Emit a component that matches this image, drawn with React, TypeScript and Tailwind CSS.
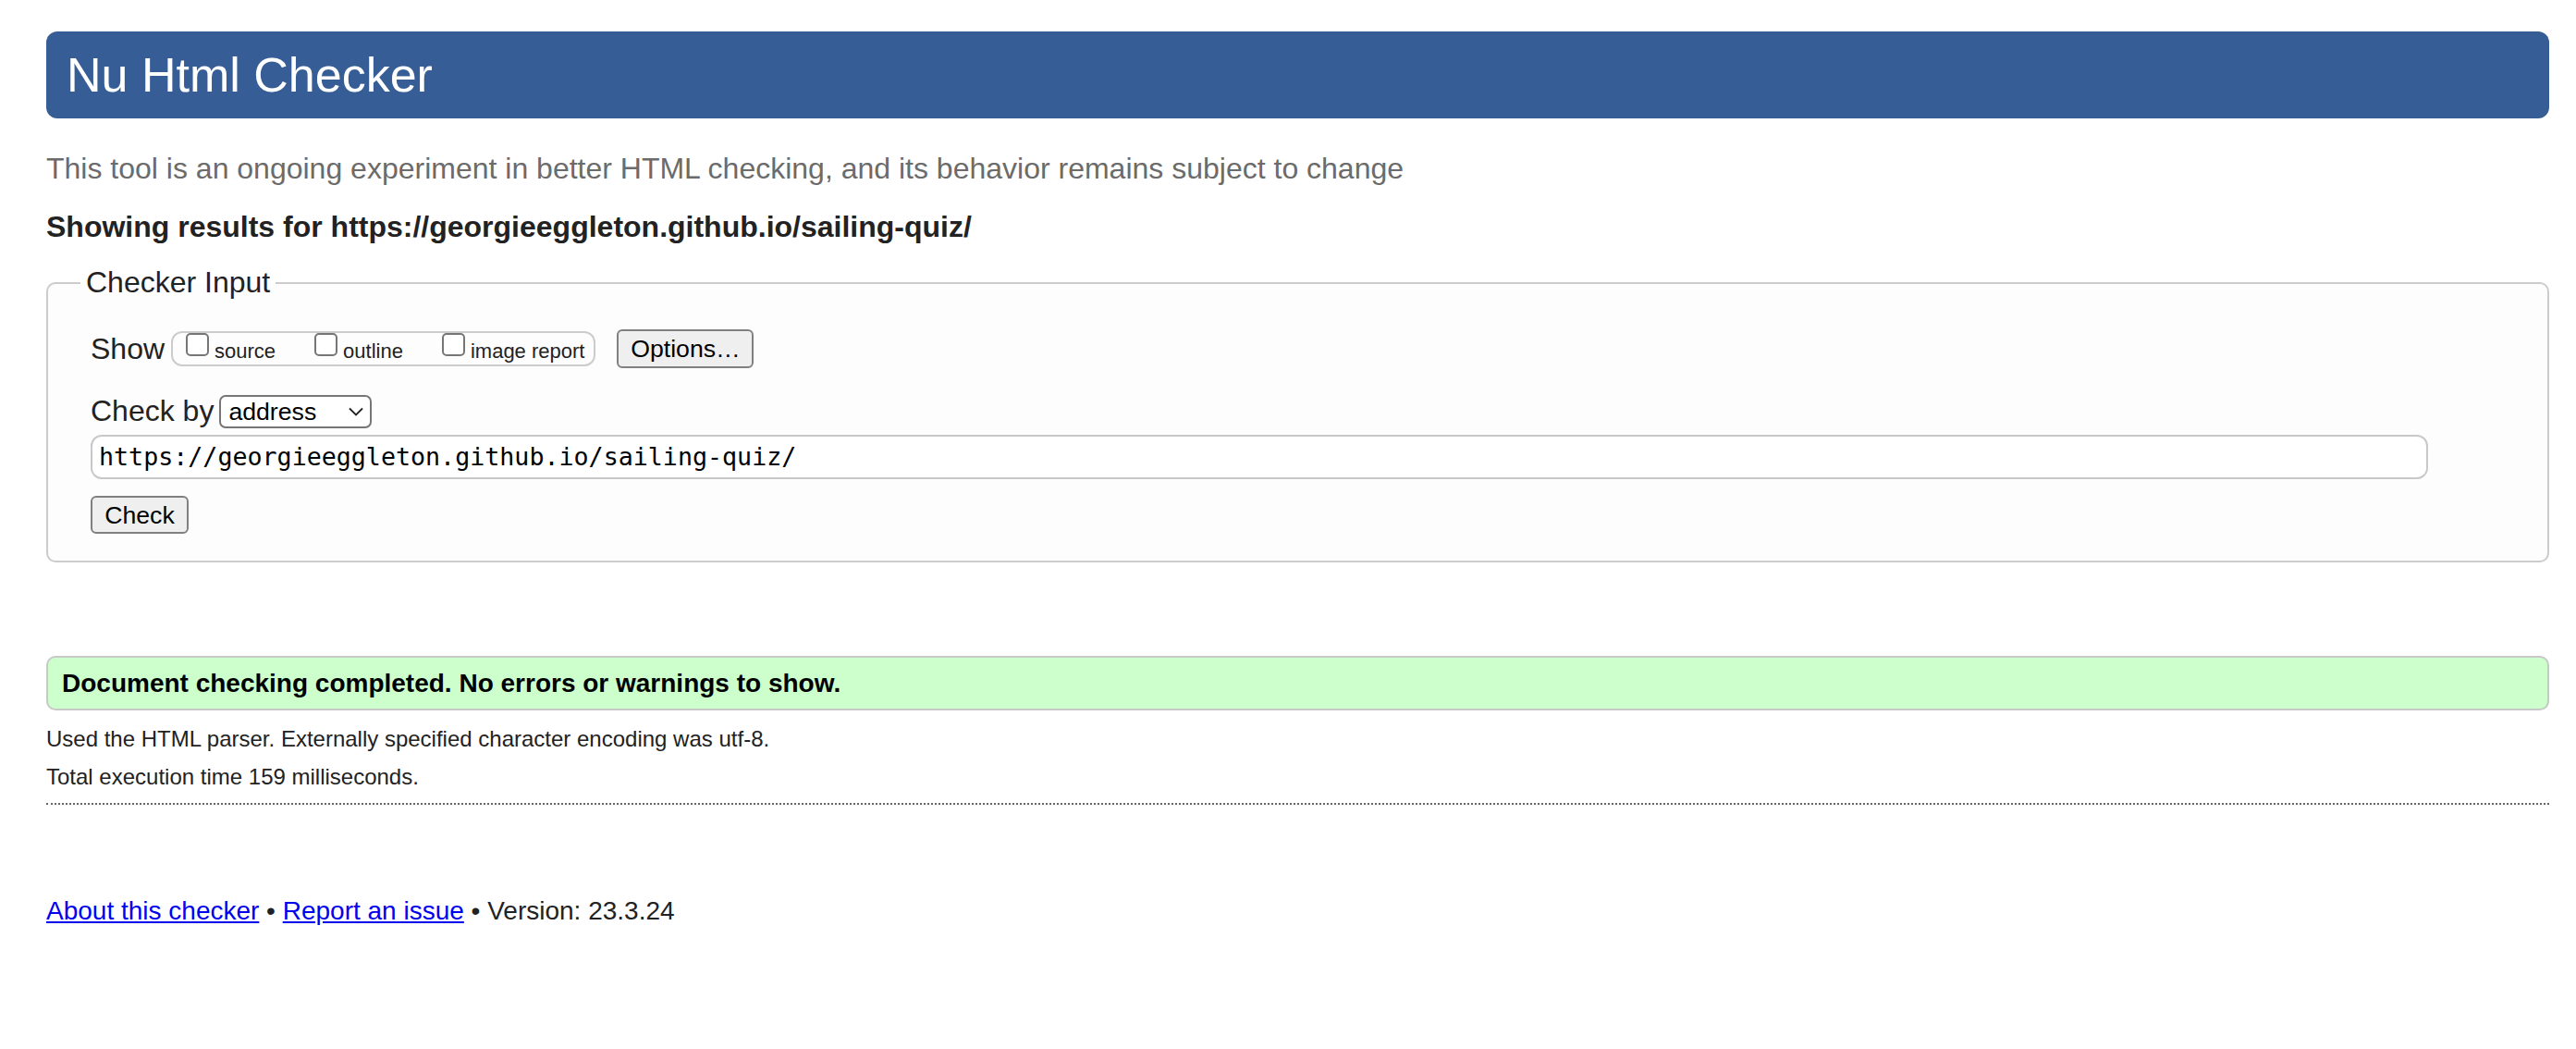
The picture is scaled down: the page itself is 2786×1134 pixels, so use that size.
import React from "react";

function Box({ label }: { label: string }) {
  return (
    <span className="flex items-baseline">
      <span className="inline-block h-[25px] w-[25px] -translate-y-[2px] rounded-[5px] border-2 border-[#767676] bg-white" />
      <span className="ml-[6px] text-[22px] leading-[25px] text-[#222]">{label}</span>
    </span>
  );
}

export default function App() {
  return (
    <div className="min-h-screen bg-white pl-[50px] pr-[29px] pt-[34px] pb-[80px] font-[family-name:'Liberation_Sans',Arial,sans-serif] text-[#222]">
      <h1 className="flex h-[94px] items-center rounded-[12px] bg-[#365d95] pl-[22px] text-[52px] font-normal text-white">
        Nu Html Checker
      </h1>

      <p className="mt-[36px] text-[32px] leading-[37px] text-[#6b6b6b]">
        This tool is an ongoing experiment in better HTML checking, and its behavior remains subject to change
      </p>

      <p className="mt-[26px] text-[32px] font-bold leading-[37px] text-[#222]">
        Showing results for https://georgieeggleton.github.io/sailing-quiz/
      </p>

      <fieldset className="mt-[23px] rounded-[10px] border-2 border-[#cccccc] bg-[#fdfdfd] px-[46px] pb-[29px] pt-[32px]">
        <legend className="-ml-[11px] px-[6px] text-[32px] leading-[37px] text-[#222]">Checker Input</legend>

        <div className="flex h-[42px] items-center">
          <span className="text-[32px] leading-[37px]">Show</span>
          <div className="ml-[7px] flex h-[38px] items-center gap-[42px] rounded-[12px] border-2 border-[#cccccc] pl-[14px] pr-[10px]">
            <Box label="source" />
            <Box label="outline" />
            <Box label="image report" />
          </div>
          <div className="ml-[23px] flex h-[42px] w-[148px] items-center justify-center rounded-[6px] border-2 border-[#808080] bg-[#efefef] text-[26.67px] text-black">
            Options…
          </div>
        </div>

        <div className="mt-[28px] flex h-[37px] items-center">
          <span className="text-[32px] leading-[37px]">Check by</span>
          <div className="ml-[6px] flex h-[36px] w-[165px] items-center justify-between rounded-[7px] border-2 border-[#767676] bg-white pl-[8px] pr-[7px] text-[26.67px] text-black">
            <span>address</span>
            <svg width="16" height="10" viewBox="0 0 16 10" fill="none">
              <polyline points="1,1.5 8,8.5 15,1.5" stroke="#222" strokeWidth="1.8" />
            </svg>
          </div>
        </div>

        <div className="mt-[7px] flex h-[48px] w-[2528px] items-center rounded-[12px] border-2 border-[#c8c8c8] bg-white pl-[7px] font-[family-name:'DejaVu_Sans_Mono',monospace] text-[26.67px] text-black">
          https://georgieeggleton.github.io/sailing-quiz/
        </div>

        <div className="mt-[18px] flex h-[41px] w-[106px] items-center justify-center rounded-[6px] border-2 border-[#808080] bg-[#efefef] text-[26.67px] text-black">
          Check
        </div>
      </fieldset>

      <div className="mt-[101px] flex h-[59px] items-center rounded-[10px] border-2 border-[#c8c8c8] bg-[#ccffcc] pl-[15px] text-[28px] font-bold text-black">
        Document checking completed. No errors or warnings to show.
      </div>

      <p className="mt-[17px] text-[24px] leading-[28px] text-[#222]">
        Used the HTML parser. Externally specified character encoding was utf-8.
      </p>
      <p className="mt-[13px] text-[24px] leading-[28px] text-[#222]">Total execution time 159 milliseconds.</p>

      <div className="mt-[14px] border-t-2 border-dotted border-[#666666]" />

      <p className="mt-[99px] text-[28px] leading-[32px] text-[#222]">
        <a className="text-[#0000ee] underline" href="#">About this checker</a>
        {" • "}
        <a className="text-[#0000ee] underline" href="#">Report an issue</a>
        {" • Version: 23.3.24"}
      </p>
    </div>
  );
}
